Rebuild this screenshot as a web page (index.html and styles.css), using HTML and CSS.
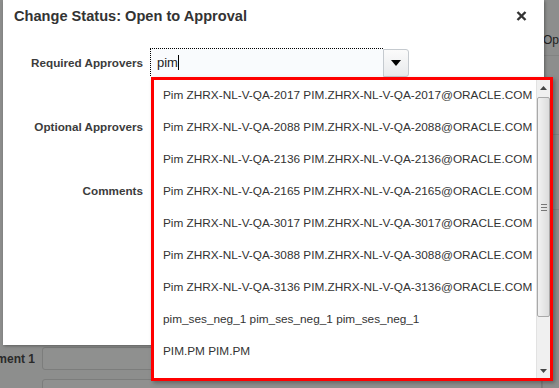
FILE: index.html
```html
<!DOCTYPE html>
<html lang="en">
<head>
    <meta charset="UTF-8">
    <meta name="viewport" content="width=device-width, initial-scale=1.0">
    <title>Change Status</title>
    <link rel="stylesheet" href="styles.css">
</head>
<body>
    <!-- page behind the modal, greyed out -->
    <div class="backdrop">
        <div class="back-main">
            <div class="back-row">
                <span class="back-label">ment 1</span>
                <div class="back-input"></div>
            </div>
            <div class="back-row">
                <span class="back-label">ccccc</span>
                <div class="back-input"></div>
            </div>
        </div>
        <div class="back-side">
            <p class="side-op">Op</p>
            <p class="side-e">e</p>
            <p class="side-m">M</p>
            <p class="side-m2">M</p>
        </div>
    </div>

    <div class="dialog">
        <div class="dialog-head">
            <h1 class="dialog-title">Change Status: Open to Approval</h1>
            <svg class="close" width="11" height="10" viewBox="0 0 11 10">
                <path d="M1.5 1 L9.5 9 M9.5 1 L1.5 9" stroke="#333" stroke-width="2.4" fill="none"/>
            </svg>
        </div>

        <div class="form">
            <div class="form-row">
                <label class="form-label">Required Approvers</label>
                <div class="combo">
                    <div class="combo-input">pim<span class="caret"></span></div>
                    <div class="combo-btn">
                        <svg width="10" height="6" viewBox="0 0 10 6"><path d="M0 0 H10 L5 6 Z" fill="#000"/></svg>
                    </div>
                </div>
            </div>
            <div class="form-row">
                <label class="form-label">Optional Approvers</label>
            </div>
            <div class="form-row">
                <label class="form-label">Comments</label>
            </div>
        </div>
    </div>

    <!-- suggestions popup of the required approvers field -->
    <div class="suggest">
        <ul class="suggest-list">
            <li>Pim ZHRX-NL-V-QA-2017 PIM.ZHRX-NL-V-QA-2017@ORACLE.COM</li>
            <li>Pim ZHRX-NL-V-QA-2088 PIM.ZHRX-NL-V-QA-2088@ORACLE.COM</li>
            <li>Pim ZHRX-NL-V-QA-2136 PIM.ZHRX-NL-V-QA-2136@ORACLE.COM</li>
            <li>Pim ZHRX-NL-V-QA-2165 PIM.ZHRX-NL-V-QA-2165@ORACLE.COM</li>
            <li>Pim ZHRX-NL-V-QA-3017 PIM.ZHRX-NL-V-QA-3017@ORACLE.COM</li>
            <li>Pim ZHRX-NL-V-QA-3088 PIM.ZHRX-NL-V-QA-3088@ORACLE.COM</li>
            <li>Pim ZHRX-NL-V-QA-3136 PIM.ZHRX-NL-V-QA-3136@ORACLE.COM</li>
            <li>pim_ses_neg_1 pim_ses_neg_1 pim_ses_neg_1</li>
            <li>PIM.PM PIM.PM</li>
        </ul>
        <div class="scrollbar">
            <div class="sb-arrow">
                <svg width="7" height="4" viewBox="0 0 7 4"><path d="M0 4 H7 L3.5 0 Z" fill="#444"/></svg>
            </div>
            <div class="sb-track">
                <div class="sb-thumb">
                    <span class="grip"></span>
                </div>
            </div>
            <div class="sb-arrow">
                <svg width="7" height="4" viewBox="0 0 7 4"><path d="M0 0 H7 L3.5 4 Z" fill="#444"/></svg>
            </div>
        </div>
    </div>
</body>
</html>
```

FILE: styles.css
```css
body {
    margin: 0;
    padding: 0;
    width: 559px;
    height: 388px;
    overflow: hidden;
    position: relative;
    background-color: #8d8e8d;
    font-family: "Liberation Sans", Arial, sans-serif;
    font-size: 12px;
    color: #333;
}

.backdrop {
    display: flex;
    height: 388px;
}

.back-main {
    width: 545px;
    padding-top: 347px;
    box-sizing: border-box;
}

.back-row {
    display: flex;
    align-items: center;
    gap: 7px;
    height: 23px;
    margin-bottom: 9px;
}

.back-label {
    width: 35px;
    text-align: right;
    font-weight: bold;
    font-size: 12px;
    color: #2a2a2a;
    white-space: nowrap;
    overflow: hidden;
    direction: rtl;
}

.back-input {
    flex: 1;
    height: 21px;
    border: 1px solid #7c7d7c;
    border-radius: 3px;
    background-color: #8f908f;
}

.back-side {
    flex: 1;
    border-left: 1px solid #7f807f;
}

.back-side p {
    margin: 0;
    font-size: 12px;
    color: #222;
    line-height: 14px;
    border-bottom: 1px solid #828382;
}

.side-op { padding-top: 33px; padding-bottom: 8px; }
.side-e { padding-top: 34px; padding-bottom: 30px; }
.side-m { padding-top: 52px; padding-bottom: 8px; }
.side-m2 { padding-top: 34px; border-bottom: none !important; }

.dialog {
    position: absolute;
    left: 3px;
    top: 0;
    width: 541px;
    height: 345px;
    background-color: #fff;
    box-shadow: 1px 1px 3px rgba(0, 0, 0, 0.35);
}

.dialog-head {
    display: flex;
    align-items: center;
    justify-content: space-between;
    padding: 7px 17px 0 11px;
    height: 18px;
}

.dialog-title {
    margin: 0;
    font-size: 14.6px;
    line-height: 18px;
    font-weight: bold;
    color: #333;
}

.form {
    display: flex;
    flex-direction: column;
    gap: 35px;
    padding-top: 23px;
}

.form-row {
    display: flex;
    align-items: center;
    height: 29px;
}

.form-label {
    width: 140px;
    text-align: right;
    font-weight: bold;
    font-size: 11.7px;
    color: #3c3c3c;
}

.combo {
    display: flex;
    height: 29px;
    margin-left: 7px;
}

.combo-input {
    width: 233px;
    height: 28px;
    box-sizing: border-box;
    border-top: 1px dotted #000;
    border-left: 1px dotted #000;
    background-color: #f9fbfd;
    padding: 6px 0 0 6px;
    font-size: 13px;
    color: #222;
}

.caret {
    display: inline-block;
    width: 1px;
    height: 15px;
    background-color: #000;
    vertical-align: -3px;
}

.combo-btn {
    width: 26px;
    height: 28px;
    box-sizing: border-box;
    margin-top: 1px;
    border: 1px solid #c5cacf;
    border-radius: 0 3px 3px 0;
    background: linear-gradient(#fbfbfb, #e8eaec);
    display: flex;
    align-items: center;
    justify-content: center;
}

.suggest {
    position: absolute;
    left: 151px;
    top: 77px;
    width: 402px;
    height: 304px;
    box-sizing: border-box;
    border: 3px solid #ff0000;
    background-color: #fff;
    display: flex;
    box-shadow: 2px 2px 4px rgba(0, 0, 0, 0.3);
}

.suggest-list {
    list-style: none;
    margin: -1px 0 0;
    padding: 0;
    flex: 1;
    overflow: hidden;
}

.suggest-list li {
    height: 32px;
    line-height: 32px;
    padding-left: 9px;
    white-space: nowrap;
    color: #333;
    font-size: 11.8px;
}

.scrollbar {
    width: 13px;
    display: flex;
    flex-direction: column;
    background-color: #f0f0f0;
    border-left: 1px solid #e2e2e2;
}

.sb-arrow {
    height: 15px;
    display: flex;
    align-items: center;
    justify-content: center;
}

.sb-track {
    flex: 1;
    padding: 2px 0 46px;
}

.sb-thumb {
    height: 100%;
    box-sizing: border-box;
    border: 1px solid #a9a9a9;
    border-radius: 2px;
    background: linear-gradient(to right, #f2f2f2, #dcdcdc);
    display: flex;
    align-items: center;
    justify-content: center;
}

.grip {
    width: 6px;
    height: 5px;
    border-top: 1px solid #777;
    border-bottom: 1px solid #777;
    position: relative;
}

.grip::after {
    content: "";
    position: absolute;
    left: 0;
    right: 0;
    top: 2px;
    border-top: 1px solid #777;
}
```
